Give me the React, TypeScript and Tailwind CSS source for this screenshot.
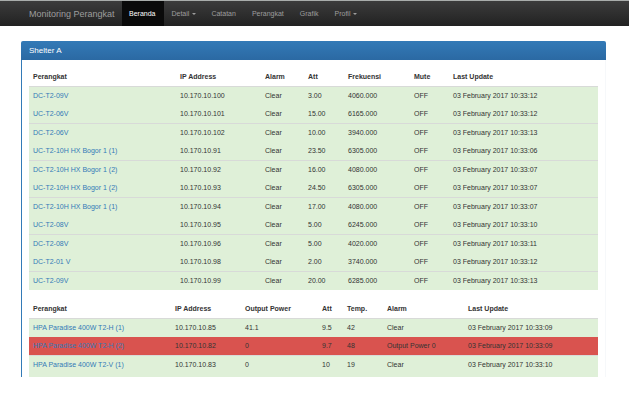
type Status = 'ok' | 'danger';

type TableData = {
  label: string;
  columns: { title: string; width: string }[];
  rows: { status: Status; cells: string[] }[];
};

const ok = (...cells: string[]) => ({ status: 'ok' as Status, cells });
const danger = (...cells: string[]) => ({ status: 'danger' as Status, cells });

const converters: TableData = {
  label: 'Converter',
  columns: [
    { title: 'Perangkat', width: 'w-[147px]' },
    { title: 'IP Address', width: 'w-[85px]' },
    { title: 'Alarm', width: 'w-[43px]' },
    { title: 'Att', width: 'w-[40px]' },
    { title: 'Frekuensi', width: 'w-[66px]' },
    { title: 'Mute', width: 'w-[39px]' },
    { title: 'Last Update', width: 'w-auto' },
  ],
  rows: [
    ok('DC-T2-09V', '10.170.10.100', 'Clear', '3.00', '4060.000', 'OFF', '03 February 2017 10:33:12'),
    ok('UC-T2-06V', '10.170.10.101', 'Clear', '15.00', '6165.000', 'OFF', '03 February 2017 10:33:12'),
    ok('DC-T2-06V', '10.170.10.102', 'Clear', '10.00', '3940.000', 'OFF', '03 February 2017 10:33:13'),
    ok('UC-T2-10H HX Bogor 1 (1)', '10.170.10.91', 'Clear', '23.50', '6305.000', 'OFF', '03 February 2017 10:33:06'),
    ok('DC-T2-10H HX Bogor 1 (2)', '10.170.10.92', 'Clear', '16.00', '4080.000', 'OFF', '03 February 2017 10:33:07'),
    ok('UC-T2-10H HX Bogor 1 (2)', '10.170.10.93', 'Clear', '24.50', '6305.000', 'OFF', '03 February 2017 10:33:07'),
    ok('DC-T2-10H HX Bogor 1 (1)', '10.170.10.94', 'Clear', '17.00', '4080.000', 'OFF', '03 February 2017 10:33:07'),
    ok('UC-T2-08V', '10.170.10.95', 'Clear', '5.00', '6245.000', 'OFF', '03 February 2017 10:33:10'),
    ok('DC-T2-08V', '10.170.10.96', 'Clear', '5.00', '4020.000', 'OFF', '03 February 2017 10:33:11'),
    ok('DC-T2-01 V', '10.170.10.98', 'Clear', '2.00', '3740.000', 'OFF', '03 February 2017 10:33:12'),
    ok('UC-T2-09V', '10.170.10.99', 'Clear', '20.00', '6285.000', 'OFF', '03 February 2017 10:33:13'),
  ],
};

const amplifiers: TableData = {
  label: 'HPA',
  columns: [
    { title: 'Perangkat', width: 'w-[142px]' },
    { title: 'IP Address', width: 'w-[70px]' },
    { title: 'Output Power', width: 'w-[77px]' },
    { title: 'Att', width: 'w-[25px]' },
    { title: 'Temp.', width: 'w-[40px]' },
    { title: 'Alarm', width: 'w-[81px]' },
    { title: 'Last Update', width: 'w-auto' },
  ],
  rows: [
    ok('HPA Paradise 400W T2-H (1)', '10.170.10.85', '41.1', '9.5', '42', 'Clear', '03 February 2017 10:33:09'),
    danger('HPA Paradise 400W T2-H (2)', '10.170.10.82', '0', '9.7', '48', 'Output Power 0', '03 February 2017 10:33:09'),
    ok('HPA Paradise 400W T2-V (1)', '10.170.10.83', '0', '10', '19', 'Clear', '03 February 2017 10:33:10'),
  ],
};

const rowStyle: Record<Status, string> = {
  ok: 'bg-[#dff0d8]',
  danger: 'bg-[#d9534f]',
};

function DeviceTable({ data }: { data: TableData }) {
  return (
    <table aria-label={data.label} className="w-full table-fixed border-separate border-spacing-0 text-left">
      <colgroup>
        {data.columns.map((c) => (
          <col key={c.title} className={c.width} />
        ))}
      </colgroup>
      <thead>
        <tr className="h-[18px]">
          {data.columns.map((c) => (
            <th key={c.title} scope="col" className="px-1 py-0 font-bold whitespace-nowrap">
              {c.title}
            </th>
          ))}
        </tr>
      </thead>
      <tbody>
        {data.rows.map((row) => (
          <tr key={row.cells[0]} className={`group h-[18px] odd:h-[19px] ${rowStyle[row.status]}`}>
            {row.cells.map((cell, i) => (
              <td key={i} className="border-[#d8dad8] px-1 py-0 whitespace-nowrap group-odd:border-t">
                {i === 0 ? (
                  <a href="#" className="text-[#337ab7]">
                    {cell}
                  </a>
                ) : (
                  cell
                )}
              </td>
            ))}
          </tr>
        ))}
      </tbody>
    </table>
  );
}

const menu = [
  { title: 'Beranda', active: true },
  { title: 'Detail', dropdown: true },
  { title: 'Catatan' },
  { title: 'Perangkat' },
  { title: 'Grafik' },
  { title: 'Profil', dropdown: true },
];

function Navbar() {
  return (
    <nav className="flex h-[26px] border-t border-[#a9adab] bg-linear-to-b from-[#3c3c3c] to-[#222222] pl-[29px] text-[#9d9d9d]">
      <a href="#" className="flex w-[93px] items-center text-[9px] whitespace-nowrap">
        Monitoring Perangkat
      </a>
      <ul className="flex">
        {menu.map((m) => (
          <li key={m.title} className="flex">
            {m.dropdown ? (
              <button type="button" className="flex items-center gap-[3px] pr-2 pl-[7px]">
                {m.title}
                <span className="border-x-2 border-t-2 border-x-transparent border-t-[#9d9d9d]" />
              </button>
            ) : (
              <a
                href="#"
                className={`flex items-center pr-[9px] pl-[7px] ${m.active ? 'bg-[#0a0a0a] text-white' : ''}`}
              >
                {m.title}
              </a>
            )}
          </li>
        ))}
      </ul>
    </nav>
  );
}

export default function App() {
  return (
    <div className="min-h-screen bg-white font-['Liberation_Sans',Arial,sans-serif] text-[7px] leading-[10px] text-[#333333]">
      <Navbar />
      <main className="pt-[15px] pr-[23px] pl-[21px]">
        <section>
          <h1 className="flex h-[19px] items-center rounded-t-xs bg-linear-to-b from-[#337ab7] to-[#2b69a3] px-2 text-[8px] text-white">
            Shelter A
          </h1>
          <div className="flex flex-col gap-[10px] border-r border-l border-r-[#f6f8fa] border-l-[#337ab7] px-[7px] pt-2">
            <DeviceTable data={converters} />
            <div>
              <DeviceTable data={amplifiers} />
              <div className="h-[3px] bg-[#dff0d8]" />
            </div>
          </div>
        </section>
      </main>
    </div>
  );
}
